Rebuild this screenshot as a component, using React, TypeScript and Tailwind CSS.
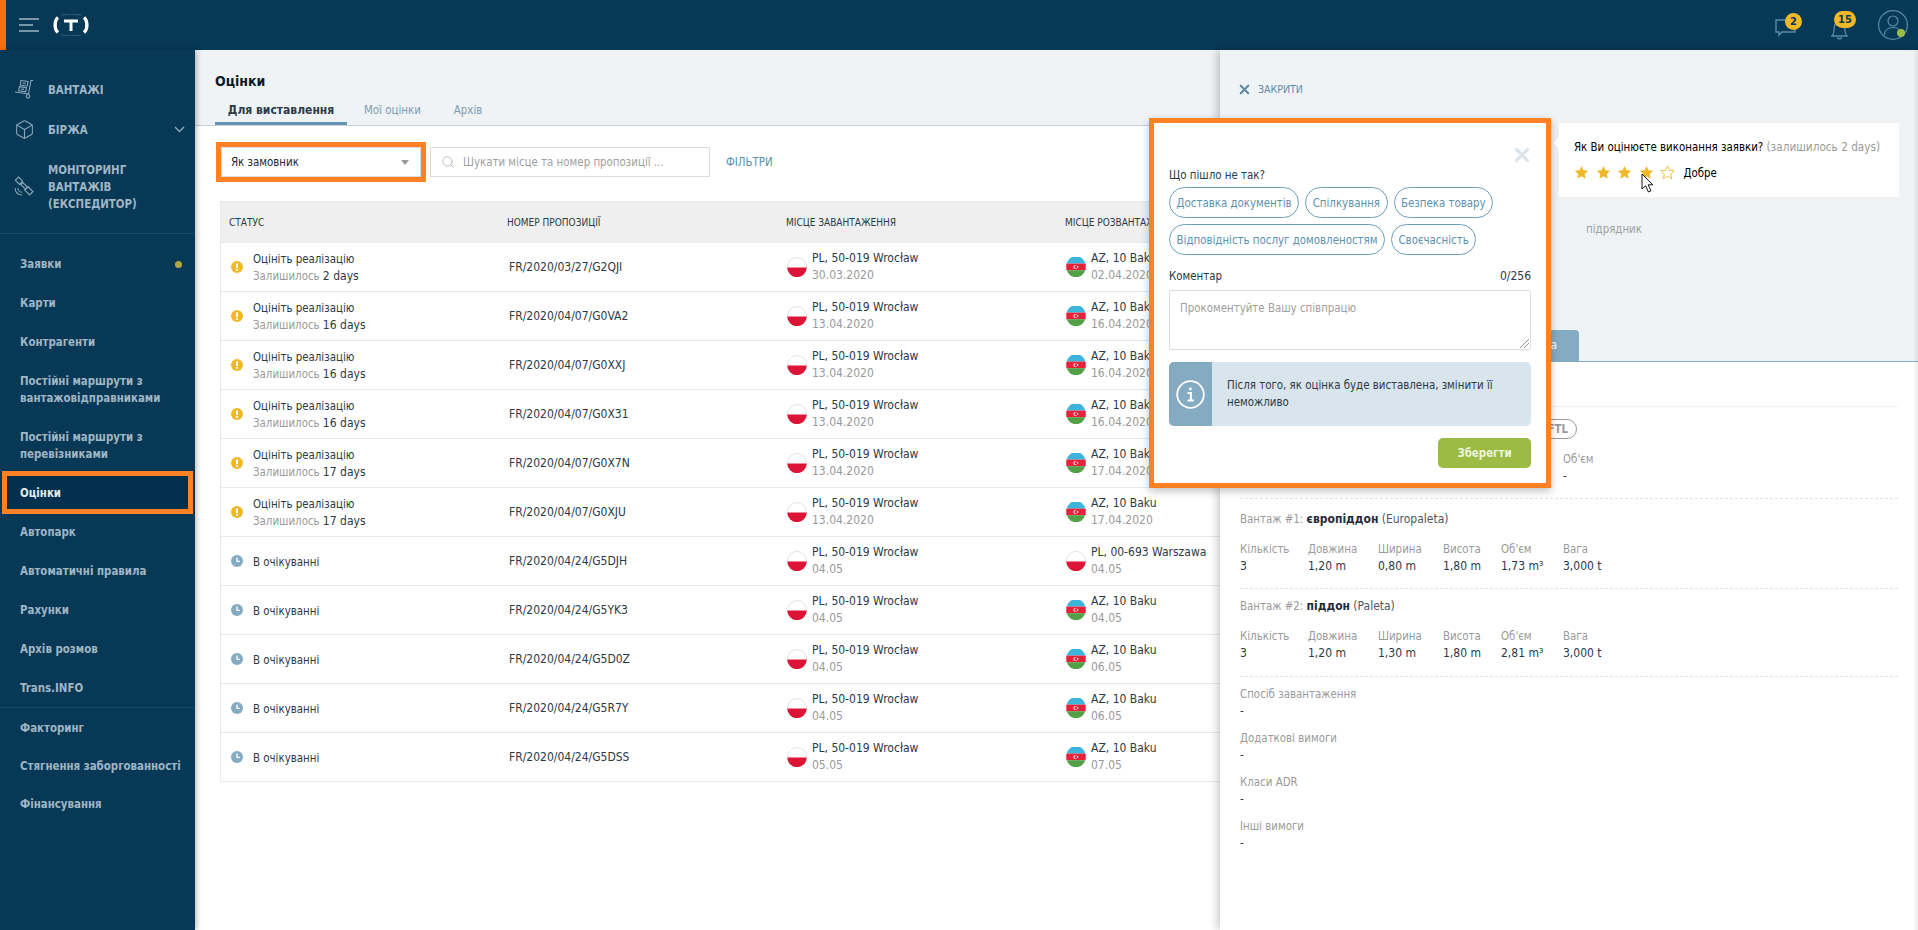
import { Box, Search, X } from "lucide-react"

const sideTop = [
  { label: ["ВАНТАЖІ"], icon: "cart" },
  { label: ["БІРЖА"], icon: "box", arrow: true },
  { label: ["МОНІТОРИНГ", "ВАНТАЖІВ", "(ЕКСПЕДИТОР)"], icon: "sat" },
]

const sideMain = [
  "Заявки",
  "Карти",
  "Контрагенти",
  "Постійні маршрути з вантажовідправниками",
  "Постійні маршрути з перевізниками",
  "Оцінки",
  "Автопарк",
  "Автоматичні правила",
  "Рахунки",
  "Архів розмов",
  "Trans.INFO",
]

const sideBottom = ["Факторинг", "Стягнення заборгованності", "Фінансування"]

const rows = [
  { left: "2 days", no: "FR/2020/03/27/G2QJI", from: "30.03.2020", to: "02.04.2020" },
  { left: "16 days", no: "FR/2020/04/07/G0VA2", from: "13.04.2020", to: "16.04.2020" },
  { left: "16 days", no: "FR/2020/04/07/G0XXJ", from: "13.04.2020", to: "16.04.2020" },
  { left: "16 days", no: "FR/2020/04/07/G0X31", from: "13.04.2020", to: "16.04.2020" },
  { left: "17 days", no: "FR/2020/04/07/G0X7N", from: "13.04.2020", to: "17.04.2020" },
  { left: "17 days", no: "FR/2020/04/07/G0XJU", from: "13.04.2020", to: "17.04.2020" },
  { no: "FR/2020/04/24/G5DJH", from: "04.05", to: "04.05", pl: true },
  { no: "FR/2020/04/24/G5YK3", from: "04.05", to: "04.05" },
  { no: "FR/2020/04/24/G5D0Z", from: "04.05", to: "06.05" },
  { no: "FR/2020/04/24/G5R7Y", from: "04.05", to: "06.05" },
  { no: "FR/2020/04/24/G5DSS", from: "05.05", to: "07.05" },
]

const cargo = [
  { title: "Вантаж #1:", name: "європіддон", extra: "(Europaleta)", w: "0,80 m", vol: "1,73 m³" },
  { title: "Вантаж #2:", name: "піддон", extra: "(Paleta)", w: "1,30 m", vol: "2,81 m³" },
]

const extraFields = ["Спосіб завантаження", "Додаткові вимоги", "Класи ADR", "Інші вимоги"]

function PlFlag() {
  return (
    <svg width="20" height="20" viewBox="0 0 20 20" className="shrink-0">
      <circle cx="10" cy="10" r="9.5" fill="#fff" stroke="#e3e3e3" />
      <path d="M0.3 10.5h19.4a9.7 9.7 0 0 1-19.4 0z" fill="#dc1537" />
    </svg>
  )
}

function AzFlag() {
  return (
    <svg width="20" height="20" viewBox="0 0 20 20" className="shrink-0">
      <circle cx="10" cy="10" r="9.8" fill="#e3e3e3" />
      <path d="M0.8 6.6a9.4 9.4 0 0 1 18.4 0z" fill="#3db4dc" />
      <rect x="0.3" y="6.6" width="19.4" height="6.6" fill="#e8213a" />
      <path d="M0.9 13.2h18.2a9.4 9.4 0 0 1-18.2 0z" fill="#53a146" />
      <circle cx="9.4" cy="9.9" r="2" fill="#fff" />
      <circle cx="10" cy="9.9" r="1.6" fill="#e8213a" />
      <circle cx="11.6" cy="9.9" r="0.8" fill="#fff" />
    </svg>
  )
}

function WarnIcon() {
  return (
    <svg width="12" height="12" viewBox="0 0 12 12" className="shrink-0">
      <circle cx="6" cy="6" r="6" fill="#f0b828" />
      <rect x="5" y="2.2" width="2" height="5" rx="0.8" fill="#fff" />
      <circle cx="6" cy="9" r="1.1" fill="#fff" />
    </svg>
  )
}

function ClockIcon() {
  return (
    <svg width="12" height="12" viewBox="0 0 12 12" className="shrink-0">
      <circle cx="6" cy="6" r="6" fill="#85abc2" />
      <path d="M6 2.6V6.4H9" fill="none" stroke="#fff" strokeWidth="1.3" />
    </svg>
  )
}

function Star({ filled }: { filled: boolean }) {
  return (
    <svg width="15" height="15" viewBox="0 0 24 24">
      <path
        d="M12 1.5l3.2 7 7.6.8-5.7 5.1 1.6 7.5L12 18.1l-6.7 3.8 1.6-7.5L1.2 9.3l7.6-.8z"
        fill={filled ? "#f0b828" : "#fff"}
        stroke="#f0b828"
        strokeWidth={filled ? 0 : 1.4}
      />
    </svg>
  )
}

function SideIcon({ name }: { name: string }) {
  if (name === "box") return <Box size={21} strokeWidth={1.2} className="text-[#8aa6b8]" />
  if (name === "sat")
    return (
      <svg width="20" height="20" viewBox="0 0 20 20" fill="none" stroke="#8aa6b8" strokeWidth="1.1">
        <path d="M4.5 1l4.2 4.2-3.2 3.2L1.3 4.2z" />
        <path d="M14 10.5l5 5-3.4 3.4-5-5z" />
        <path d="M6.8 8.5l2-2 4.8 4.8-2 2z" />
        <path d="M1 12c0 4 3 7 7 7" />
        <path d="M3.8 12c0 2.3 1.9 4.2 4.2 4.2" />
      </svg>
    )
  return (
    <svg width="20" height="20" viewBox="0 0 20 20" fill="none" stroke="#8aa6b8" strokeWidth="1.1">
      <path d="M19 1.5h-2L14.5 15 1 13" />
      <circle cx="14" cy="17.3" r="1.8" />
      <path d="M7 1.5l7 1-.8 4.5-7-1z" />
      <path d="M5.4 7.6l7 1-.8 4.3-7-1z" />
      <path d="M8.6 4l3 .4M7 10l3 .4" />
    </svg>
  )
}

function Sidebar() {
  return (
    <aside className="relative z-10 w-[195px] shrink-0 bg-[#073856] pt-[19px] font-bold text-[#a0b6c4] shadow-[2px_0_5px_rgba(0,0,0,0.25)]">
      {sideTop.map((item) => (
        <div
          key={item.label[0]}
          className={`flex items-center pl-[14px] pr-[10px] ${item.label.length > 1 ? "h-[74px]" : "h-[40px]"}`}
        >
          <div className="w-[34px]">
            <SideIcon name={item.icon} />
          </div>
          <div className="flex-1 pt-[2px]">
            {item.label.map((l) => (
              <div key={l}>{l}</div>
            ))}
          </div>
          {item.arrow && (
            <svg width="11" height="7" viewBox="0 0 11 7" fill="none" stroke="#8aa6b8" strokeWidth="1.5">
              <path d="M1 1l4.5 4.5L10 1" />
            </svg>
          )}
        </div>
      ))}
      <div className="mt-[10px] border-t border-[#14496b] pt-[10px]">
        {sideMain.map((label) =>
          label === "Оцінки" ? (
            <div
              key={label}
              className="relative -my-[2px] mx-[2px] flex h-[43px] items-center border-[5px] border-[#ff8126] bg-[#03304c] pl-[13px] pt-[2px] text-[#e4ebef]"
            >
              {label}
            </div>
          ) : (
            <div key={label} className="flex items-center justify-between pb-[10px] pl-[20px] pr-[13px] pt-[12px]">
              <span className="w-[170px]">{label}</span>
              {label === "Заявки" && <span className="h-[7px] w-[7px] shrink-0 rounded-full bg-[#b3a63f]" />}
            </div>
          ),
        )}
      </div>
      <div className="border-t border-[#14496b]">
        {sideBottom.map((label) => (
          <div key={label} className="flex h-[38px] items-center whitespace-nowrap pl-[20px] pt-[2px]">
            {label}
          </div>
        ))}
      </div>
    </aside>
  )
}

function Topbar() {
  return (
    <header className="flex h-[50px] shrink-0 items-center bg-[#073856]">
      <div className="h-full w-[6px] bg-[#f87008]" />
      <svg width="20" height="14" viewBox="0 0 20 14" className="ml-[13px]" stroke="#9fb8c6" strokeWidth="1.5">
        <path d="M0 1h20M0 7h14M0 13h20" />
      </svg>
      <svg width="38" height="22" viewBox="0 0 38 22" className="ml-[13px]" fill="none" stroke="#fff">
        <path d="M6 3.5C2.6 6 1.8 15 6 18.5" strokeWidth="3.4" />
        <path d="M32 3.5c3.4 2.5 4.2 11.5 0 15" strokeWidth="3.4" />
        <path d="M12 7h14M19 7v10" strokeWidth="3" />
        <path d="M9 1.2C14 -.2 24 -.2 29 1.2M9 20.8c5 1.4 15 1.4 20 0" strokeWidth="0.4" strokeOpacity="0.5" />
      </svg>
      <div className="ml-auto flex items-center">
        <div className="relative h-[24px] w-[24px]">
          <svg width="21" height="18" viewBox="0 0 21 18" fill="none" stroke="#5b8ba6" strokeWidth="1.4" className="absolute left-0 top-[6px]">
            <path d="M1 1h19v12H7l-3 3v-3H1z" />
          </svg>
          <span className="absolute left-[10px] top-0 flex h-[17px] w-[17px] items-center justify-center rounded-full bg-[#f0b828] text-[11px] font-bold text-[#073856]">
            2
          </span>
        </div>
        <div className="relative ml-[32px] h-[24px] w-[24px]">
          <svg width="17" height="21" viewBox="0 0 17 21" fill="none" stroke="#5b8ba6" strokeWidth="1.3" className="absolute left-0 top-[7px]">
            <path d="M1 16c2-2 2-4 2.2-8C3.4 4 5.5 2 8.5 2s5.1 2 5.3 6c.2 4 .2 6 2.2 8z" />
            <path d="M6.5 17.5c.4 1.8 3.6 1.8 4 0" />
          </svg>
          <span className="absolute left-[3px] top-[-2px] flex h-[17px] w-[22px] items-center justify-center rounded-full bg-[#f0b828] text-[11px] font-bold text-[#073856]">
            15
          </span>
        </div>
        <div className="relative ml-[23px] mr-[10px] h-[30px] w-[30px]">
          <svg width="30" height="30" viewBox="0 0 30 30" fill="none" stroke="#5b8ba6" strokeWidth="1.2">
            <circle cx="15" cy="15" r="14.4" />
            <circle cx="15" cy="11" r="5" />
            <path d="M6.5 25c0-5 3.5-7.5 8.5-7.5s8.5 2.5 8.5 7.5" />
          </svg>
          <span className="absolute left-[19px] top-[19px] h-[8px] w-[8px] rounded-full bg-[#9bbd45]" />
        </div>
      </div>
    </header>
  )
}

function RatingTable() {
  return (
    <div className="ml-[25px] mt-[24px] w-[1600px] border-x border-[#e4eaf0]">
      <div className="grid h-[42px] grid-cols-[278px_279px_279px_1fr] items-center border-y border-[#e4eaf0] bg-[#efefef] text-[10px] text-[#2c3a46]">
        <div className="pl-[8px]">СТАТУС</div>
        <div className="pl-[8px]">НОМЕР ПРОПОЗИЦІЇ</div>
        <div className="pl-[8px]">МІСЦЕ ЗАВАНТАЖЕННЯ</div>
        <div className="pl-[8px]">МІСЦЕ РОЗВАНТАЖЕННЯ</div>
      </div>
      {rows.map((r) => (
        <div key={r.no} className="grid h-[49px] grid-cols-[278px_279px_279px_1fr] items-center border-b border-[#e4eaf0] text-[#2c3a46]">
          <div className="flex items-center pl-[10px]">
            {r.left ? <WarnIcon /> : <ClockIcon />}
            <div className="ml-[10px] pt-[2px]">
              <div>{r.left ? "Оцініть реалізацію" : "В очікуванні"}</div>
              {r.left && (
                <div>
                  <span className="text-[#9a9a9a]">Залишилось</span> <span className="text-[12px]">{r.left}</span>
                </div>
              )}
            </div>
          </div>
          <div className="pl-[10px] text-[12px]">{r.no}</div>
          <div className="flex items-center pl-[9px] text-[12px]">
            <PlFlag />
            <div className="ml-[5px]">
              <div>PL, 50-019 Wrocław</div>
              <div className="text-[#9a9a9a]">{r.from}</div>
            </div>
          </div>
          <div className="flex items-center pl-[9px] text-[12px]">
            {r.pl ? <PlFlag /> : <AzFlag />}
            <div className="ml-[5px]">
              <div>{r.pl ? "PL, 00-693 Warszawa" : "AZ, 10 Baku"}</div>
              <div className="text-[#9a9a9a]">{r.to}</div>
            </div>
          </div>
        </div>
      ))}
    </div>
  )
}

function DetailsPanel() {
  const heads = ["Кількість", "Довжина", "Ширина", "Висота", "Об'єм", "Вага"]
  return (
    <div className="absolute bottom-0 right-0 top-0 z-20 flex w-[698px] flex-col bg-white shadow-[-3px_0_8px_rgba(0,0,0,0.2)]">
      <span className="absolute bottom-0 right-0 top-0 w-[5px] bg-gradient-to-r from-transparent to-[#00000014]" />
      <div className="h-[312px] shrink-0 border-b border-[#85abc2] bg-[#eff3f6]">
        <div className="flex items-center pl-[17px] pt-[31px] text-[10.5px] text-[#5f8ba5]">
          <X size={15} strokeWidth={3.4} />
          <span className="ml-[6px]">ЗАКРИТИ</span>
        </div>
        <div className="relative ml-[339px] mt-[25px] h-[74px] w-[340px] bg-white pl-[15px] pt-[16px]">
          <span className="absolute -left-[6px] top-[14px] h-0 w-0 border-y-[6px] border-r-[6px] border-y-transparent border-r-white" />
          <div>
            Як Ви оцінюєте виконання заявки? <span className="text-[11.7px] text-[#9a9a9a]">(залишилось 2 days)</span>
          </div>
          <div className="mt-[6px] flex items-center">
            {[0, 1, 2, 3, 4].map((i) => (
              <span key={i} className="mr-[6.5px] flex">
                <Star filled={i < 4} />
              </span>
            ))}
            <span className="ml-[2px] mt-[3px]">Добре</span>
          </div>
          <svg width="13" height="20" viewBox="0 0 13 20" className="absolute left-[82px] top-[50px]">
            <path d="M1 1v15l3.6-3.2L7.4 19l2.6-1.2-2.8-6h4.6z" fill="#fff" stroke="#111" />
          </svg>
        </div>
        <div className="ml-[366px] mt-[24px] text-[#a0a0a0]">підрядник</div>
        <div className="ml-[280px] mt-[92px] flex h-[31px] w-[79px] items-center justify-start rounded-t-[4px] bg-[#85abc2] pl-[20px] text-white">
          Оцінка
        </div>
      </div>
      <div className="px-[20px]">
        <div className="mt-[44px] border-t border-[#eef2f5]" />
        <div className="relative">
          <span className="absolute left-[300px] top-[12px] flex h-[20px] w-[37px] items-center justify-end rounded-full border border-[#9a9a9a] pr-[8px] font-bold text-[#9a9a9a]">
            FTL
          </span>
        </div>
        <div className="ml-[323px] mt-[44px] text-[#9a9a9a]">Об'єм</div>
        <div className="ml-[323px] text-[#2c3a46]">-</div>
        {cargo.map((c, idx) => (
          <div key={c.name}>
            <div className={`border-t border-dashed border-[#dbe5ec] ${idx === 0 ? "mt-[13px] pt-[12px]" : "mt-[13px] pt-[9px]"}`}>
              <span className="text-[#9a9a9a]">{c.title}</span> <b className="text-[12px] text-[#1f2c38]">{c.name}</b>{" "}
              <span className="text-[12px] text-[#4a5864]">{c.extra}</span>
            </div>
            <div className="mt-[13px] grid grid-cols-[68px_70px_65px_58px_62px_1fr]">
              {heads.map((h) => (
                <div key={h} className="text-[#9a9a9a]">
                  {h}
                </div>
              ))}
              {["3", "1,20 m", c.w, "1,80 m", c.vol, "3,000 t"].map((v, i) => (
                <div key={i} className="text-[12px] text-[#2c3a46]">
                  {v}
                </div>
              ))}
            </div>
          </div>
        ))}
        <div className="mt-[14px] border-t border-dashed border-[#dbe5ec] pt-[9px]">
          {extraFields.map((f) => (
            <div key={f} className="mb-[10px]">
              <div className="text-[#9a9a9a]">{f}</div>
              <div className="text-[#2c3a46]">-</div>
            </div>
          ))}
        </div>
      </div>
    </div>
  )
}

function RatePopup() {
  const chips = [
    ["Доставка документів", "Спілкування", "Безпека товару"],
    ["Відповідність послуг домовленостям", "Своєчасність"],
  ]
  return (
    <div className="absolute left-[1149px] top-[68px] z-30 h-[370px] w-[402px] border-[5px] border-[#ff8126] bg-white px-[15px] text-[#2c3a46] shadow-[0_3px_8px_rgba(0,0,0,0.25)]">
      <X size={22} strokeWidth={3.5} className="absolute right-[13px] top-[21px] text-[#dde5ea]" />
      <div className="pt-[44px]">Що пішло не так?</div>
      <div className="mt-[3px] flex flex-col gap-[6px]">
        {chips.map((row) => (
          <div key={row[0]} className="flex gap-[6px]">
            {row.map((c) => (
              <span key={c} className="flex h-[31px] items-center rounded-full border border-[#6f9fb8] px-[6.5px] pt-[1px] text-[#5c92ae]">
                {c}
              </span>
            ))}
          </div>
        ))}
      </div>
      <div className="mt-[13px] flex justify-between">
        <span>Коментар</span>
        <span className="text-[12px]">0/256</span>
      </div>
      <div className="relative mt-[5px] h-[60px] rounded-[2px] border border-[#dcdcdc] pl-[10px] pt-[9px] text-[#a0a0a0]">
        Прокоментуйте Вашу співпрацю
        <svg width="9" height="9" viewBox="0 0 9 9" className="absolute bottom-[1px] right-[1px]" stroke="#777" strokeWidth="0.8">
          <path d="M0 9L9 0M4 9l5-5" />
        </svg>
      </div>
      <div className="mt-[12px] flex h-[64px] overflow-hidden rounded-[5px] bg-[#d9e5ed]">
        <div className="flex w-[43px] items-center justify-center bg-[#85abc2]">
          <svg width="29" height="29" viewBox="0 0 29 29" fill="none" stroke="#fff">
            <circle cx="14.5" cy="14.5" r="13.3" strokeWidth="1.8" />
            <path d="M11.5 13h3.4v7M11.5 20.5h6.4" strokeWidth="2" />
            <circle cx="14.3" cy="9" r="1.4" fill="#fff" stroke="none" />
          </svg>
        </div>
        <div className="flex-1 pl-[15px] pr-[20px] pt-[15px]">Після того, як оцінка буде виставлена, змінити її неможливо</div>
      </div>
      <div className="mt-[12px] flex justify-end">
        <span className="flex h-[30px] w-[93px] items-center justify-center rounded-[5px] bg-[#9bbb45] font-bold text-[#eef4dd]">
          Зберегти
        </span>
      </div>
    </div>
  )
}

export default function App() {
  return (
    <div className="flex h-[930px] w-[1918px] flex-col overflow-hidden bg-white font-['DejaVu_Sans_Condensed','DejaVu_Sans',sans-serif] text-[11.4px] leading-[17px]">
      <Topbar />
      <div className="relative flex min-h-0 flex-1">
        <Sidebar />
        <main className="min-w-0 flex-1">
          <div className="h-[76px] border-b border-[#ccd0d3] bg-[#eff3f6] pl-[20px]">
            <h1 className="pt-[23px] text-[14px] font-bold text-[#0a1a26]">Оцінки</h1>
            <div className="mt-[8px] flex">
              <div className="flex h-[27px] w-[132px] items-start justify-center border-b-[3px] border-[#6395b0] pt-[4px] text-[12px] font-bold text-[#2c3a46]">
                Для виставлення
              </div>
              <div className="ml-[17px] pt-[4px] text-[#7c9db2]">Мої оцінки</div>
              <div className="ml-[33px] pt-[4px] text-[#7c9db2]">Архів</div>
            </div>
          </div>
          <div className="ml-[26px] mt-[21px] flex h-[30px] items-center">
            <div className="flex h-[30px] w-[200px] items-center justify-between border border-[#dcdcdc] pl-[9px] pr-[11px] text-[#1c2833] outline-[5px] outline-[#ff8126]">
              Як замовник
              <svg width="8" height="5" viewBox="0 0 8 5">
                <path d="M0 0h8L4 5z" fill="#999" />
              </svg>
            </div>
            <div className="ml-[9px] flex h-[30px] w-[280px] items-center border border-[#dcdcdc] pl-[10px] text-[#a0a0a0]">
              <Search size={14} strokeWidth={1.2} />
              <span className="ml-[8px]">Шукати місце та номер пропозиції ...</span>
            </div>
            <span className="ml-[16px] text-[#5c92ae]">ФІЛЬТРИ</span>
          </div>
          <RatingTable />
        </main>
        <DetailsPanel />
        <RatePopup />
      </div>
    </div>
  )
}
